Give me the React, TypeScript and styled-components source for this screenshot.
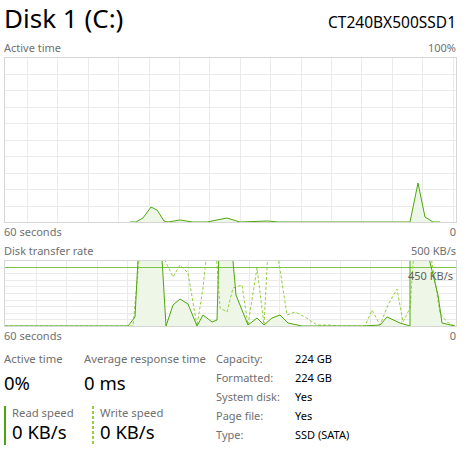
import React from 'react';
import styled, { createGlobalStyle } from 'styled-components';

const GlobalStyle = createGlobalStyle`
  html, body {
    margin: 0;
    padding: 0;
    background: #ffffff;
  }
  body {
    font-family: 'Noto Sans', 'Open Sans', sans-serif;
    color: #000000;
  }
`;

const READ = '#4da60c';
const WRITE = '#95d03c';
const FILL = '#eef6e8';
const GRID = '#ebebeb';
const FRAME = '#d6d6d6';

type Pt = [number, number];

const Page = styled.div`
  width: 475px;
  height: 449px;
  box-sizing: border-box;
  padding: 0 19px 0 4px;
  overflow: hidden;
`;

const Header = styled.div`
  display: flex;
  justify-content: space-between;
  align-items: baseline;
  height: 36px;
`;

const Title = styled.h1`
  margin: 0;
  font-size: 26px;
  font-weight: 400;
  line-height: 36px;
`;

const Model = styled.div`
  font-size: 15.5px;
  line-height: 36px;
`;

const LabelRow = styled.div<{ $h: number }>`
  display: flex;
  justify-content: space-between;
  align-items: flex-end;
  box-sizing: border-box;
  height: ${p => p.$h}px;
  padding-bottom: 2px;
  font-size: 11px;
  line-height: 14px;
  color: #707070;
`;

const AxisRow = styled.div`
  display: flex;
  justify-content: space-between;
  box-sizing: border-box;
  height: 18px;
  padding-top: 2px;
  font-size: 11px;
  line-height: 14px;
  color: #707070;
`;

const ChartBox = styled.div<{ $h: number }>`
  position: relative;
  height: ${p => p.$h}px;
  width: 453px;

  svg {
    display: block;
  }
`;

const Marker = styled.span`
  position: absolute;
  top: 9px;
  right: 4px;
  font-size: 11px;
  line-height: 14px;
  color: #5e5e5e;
`;

const Stats = styled.div`
  display: flex;
`;

const LeftStats = styled.div`
  width: 212px;
  padding-top: 6px;
`;

const StatRow = styled.div`
  display: flex;
`;

const Stat = styled.div<{ $w?: number }>`
  width: ${p => (p.$w ? `${p.$w}px` : 'auto')};
`;

const StatLabel = styled.div`
  font-size: 11.3px;
  line-height: 16px;
  color: #707070;
  white-space: nowrap;
`;

const StatValue = styled.div`
  margin-top: 3px;
  font-size: 18.5px;
  line-height: 26px;
`;

const SpeedRow = styled.div`
  display: flex;
  margin-top: 10px;
`;

const Speed = styled.div<{ $dotted?: boolean; $w?: number }>`
  box-sizing: border-box;
  width: ${p => (p.$w ? `${p.$w}px` : 'auto')};
  padding-left: 8px;
  background: ${p =>
    p.$dotted
      ? `repeating-linear-gradient(to bottom, ${WRITE} 0 3px, transparent 3px 5px) left top / 2px 100% no-repeat`
      : `linear-gradient(${READ}, ${READ}) left top / 2px 100% no-repeat`};
`;

const SpeedLabel = styled(StatLabel)`
  line-height: 13px;
`;

const SpeedValue = styled.div`
  font-size: 18.5px;
  line-height: 26px;
`;

const Props = styled.dl`
  display: grid;
  grid-template-columns: 79px auto;
  margin: 0;
  padding-top: 5px;
  font-size: 11px;
  line-height: 18px;
`;

const PropKey = styled.dt`
  color: #707070;
`;

const PropVal = styled.dd`
  margin: 0;
  color: #000000;
`;

const toPath = (pts: Pt[]) => pts.map((p, i) => `${i ? 'L' : 'M'}${p[0]} ${p[1]}`).join(' ');

interface ChartProps {
  id: string;
  top: number;
  height: number;
  gridStart: number;
  read: Pt[];
  write?: Pt[];
  limit?: number;
  children?: React.ReactNode;
}

const Chart = ({ id, top, height, gridStart, read, write, limit, children }: ChartProps) => {
  const left = 4;
  const right = 456;
  const bottom = top + height - 1;
  const rows = Array.from({ length: 9 }, (_, i) => Math.round(top + ((i + 1) * (height - 1)) / 10) + 0.5);
  const cols: number[] = [];
  for (let x = gridStart; x < right; x += 30.4) cols.push(Math.round(x) + 0.5);
  const area = `${toPath(read)} L${read[read.length - 1][0]} ${bottom + 1} L${read[0][0]} ${bottom + 1} Z`;

  return (
    <ChartBox $h={height}>
      <svg width={453} height={height} viewBox={`${left} ${top} 453 ${height}`}>
        <defs>
          <clipPath id={id}>
            <rect x={left + 1} y={top + 1} width={451} height={height - 2} />
          </clipPath>
        </defs>
        {rows.map(y => (
          <line key={`r${y}`} x1={left} x2={right} y1={y} y2={y} stroke={GRID} strokeWidth={1} />
        ))}
        {cols.map(x => (
          <line key={`c${x}`} x1={x} x2={x} y1={top} y2={bottom} stroke={GRID} strokeWidth={1} />
        ))}
        <g clipPath={`url(#${id})`}>
          <path d={area} fill={FILL} />
          {limit !== undefined && (
            <line x1={left} x2={right} y1={limit + 0.5} y2={limit + 0.5} stroke="#7cc44a" strokeWidth={1} />
          )}
          {write && (
            <path d={toPath(write)} fill="none" stroke={WRITE} strokeWidth={1} strokeDasharray="3 2" />
          )}
          <path d={toPath(read)} fill="none" stroke={READ} strokeWidth={1} strokeLinejoin="round" />
        </g>
        <rect x={left + 0.5} y={top + 0.5} width={452} height={height - 1} fill="none" stroke={FRAME} strokeWidth={1} />
      </svg>
      {children}
    </ChartBox>
  );
};

const activePts: Pt[] = [
  [130, 222], [136, 222], [143, 218], [151, 207], [157, 210], [164, 221], [168, 222], [180, 220],
  [193, 222], [207, 222], [227, 218], [240, 222], [268, 221], [278, 222], [410, 222], [418, 183],
  [425, 217], [433, 222], [440, 222],
];

const readPts: Pt[] = [
  [5, 326], [128, 326], [135, 317], [138.5, 250], [161.5, 250], [166, 326], [173, 305], [180, 299],
  [188, 304], [197, 326], [203, 315], [212, 322], [217, 320], [219, 250], [232, 250], [236, 295],
  [240, 305], [248, 325], [257, 318], [264, 325], [272, 318], [280, 315], [288, 323], [302, 326],
  [363, 326], [380, 325], [387, 317], [400, 323], [410, 326], [410, 250], [427, 250], [438, 295],
  [442, 323], [455, 326],
];

const writePts: Pt[] = [
  [5, 326], [133, 326], [140, 250], [160, 250], [173, 277], [180, 265], [188, 273], [197, 326],
  [203, 288], [207, 250], [216, 250], [220, 308], [227, 312], [233, 288], [242, 285], [248, 325],
  [257, 268], [264, 325], [268, 250], [277, 250], [287, 315], [295, 312], [305, 317], [317, 325],
  [328, 325], [338, 326], [365, 326], [372, 310], [380, 325], [388, 305], [397, 289], [403, 322],
  [410, 308], [414, 250], [430, 250], [440, 313], [447, 322], [455, 326],
];

const details: [string, string][] = [
  ['Capacity:', '224 GB'],
  ['Formatted:', '224 GB'],
  ['System disk:', 'Yes'],
  ['Page file:', 'Yes'],
  ['Type:', 'SSD (SATA)'],
];

export default function App() {
  return (
    <Page>
      <GlobalStyle />
      <Header>
        <Title>Disk 1 (C:)</Title>
        <Model>CT240BX500SSD1</Model>
      </Header>

      <LabelRow $h={21}>
        <span>Active time</span>
        <span>100%</span>
      </LabelRow>
      <Chart id="active" top={57} height={166} gridStart={27} read={activePts} />
      <AxisRow>
        <span>60 seconds</span>
        <span>0</span>
      </AxisRow>

      <LabelRow $h={19}>
        <span>Disk transfer rate</span>
        <span>500 KB/s</span>
      </LabelRow>
      <Chart id="transfer" top={260} height={67} gridStart={36} read={readPts} write={writePts} limit={267}>
        <Marker>450 KB/s</Marker>
      </Chart>
      <AxisRow>
        <span>60 seconds</span>
        <span>0</span>
      </AxisRow>

      <Stats>
        <LeftStats>
          <StatRow>
            <Stat $w={80}>
              <StatLabel>Active time</StatLabel>
              <StatValue>0%</StatValue>
            </Stat>
            <Stat>
              <StatLabel>Average response time</StatLabel>
              <StatValue>0 ms</StatValue>
            </Stat>
          </StatRow>
          <SpeedRow>
            <Speed $w={88}>
              <SpeedLabel>Read speed</SpeedLabel>
              <SpeedValue>0 KB/s</SpeedValue>
            </Speed>
            <Speed $dotted>
              <SpeedLabel>Write speed</SpeedLabel>
              <SpeedValue>0 KB/s</SpeedValue>
            </Speed>
          </SpeedRow>
        </LeftStats>
        <Props>
          {details.map(([k, v]) => (
            <React.Fragment key={k}>
              <PropKey>{k}</PropKey>
              <PropVal>{v}</PropVal>
            </React.Fragment>
          ))}
        </Props>
      </Stats>
    </Page>
  );
}
